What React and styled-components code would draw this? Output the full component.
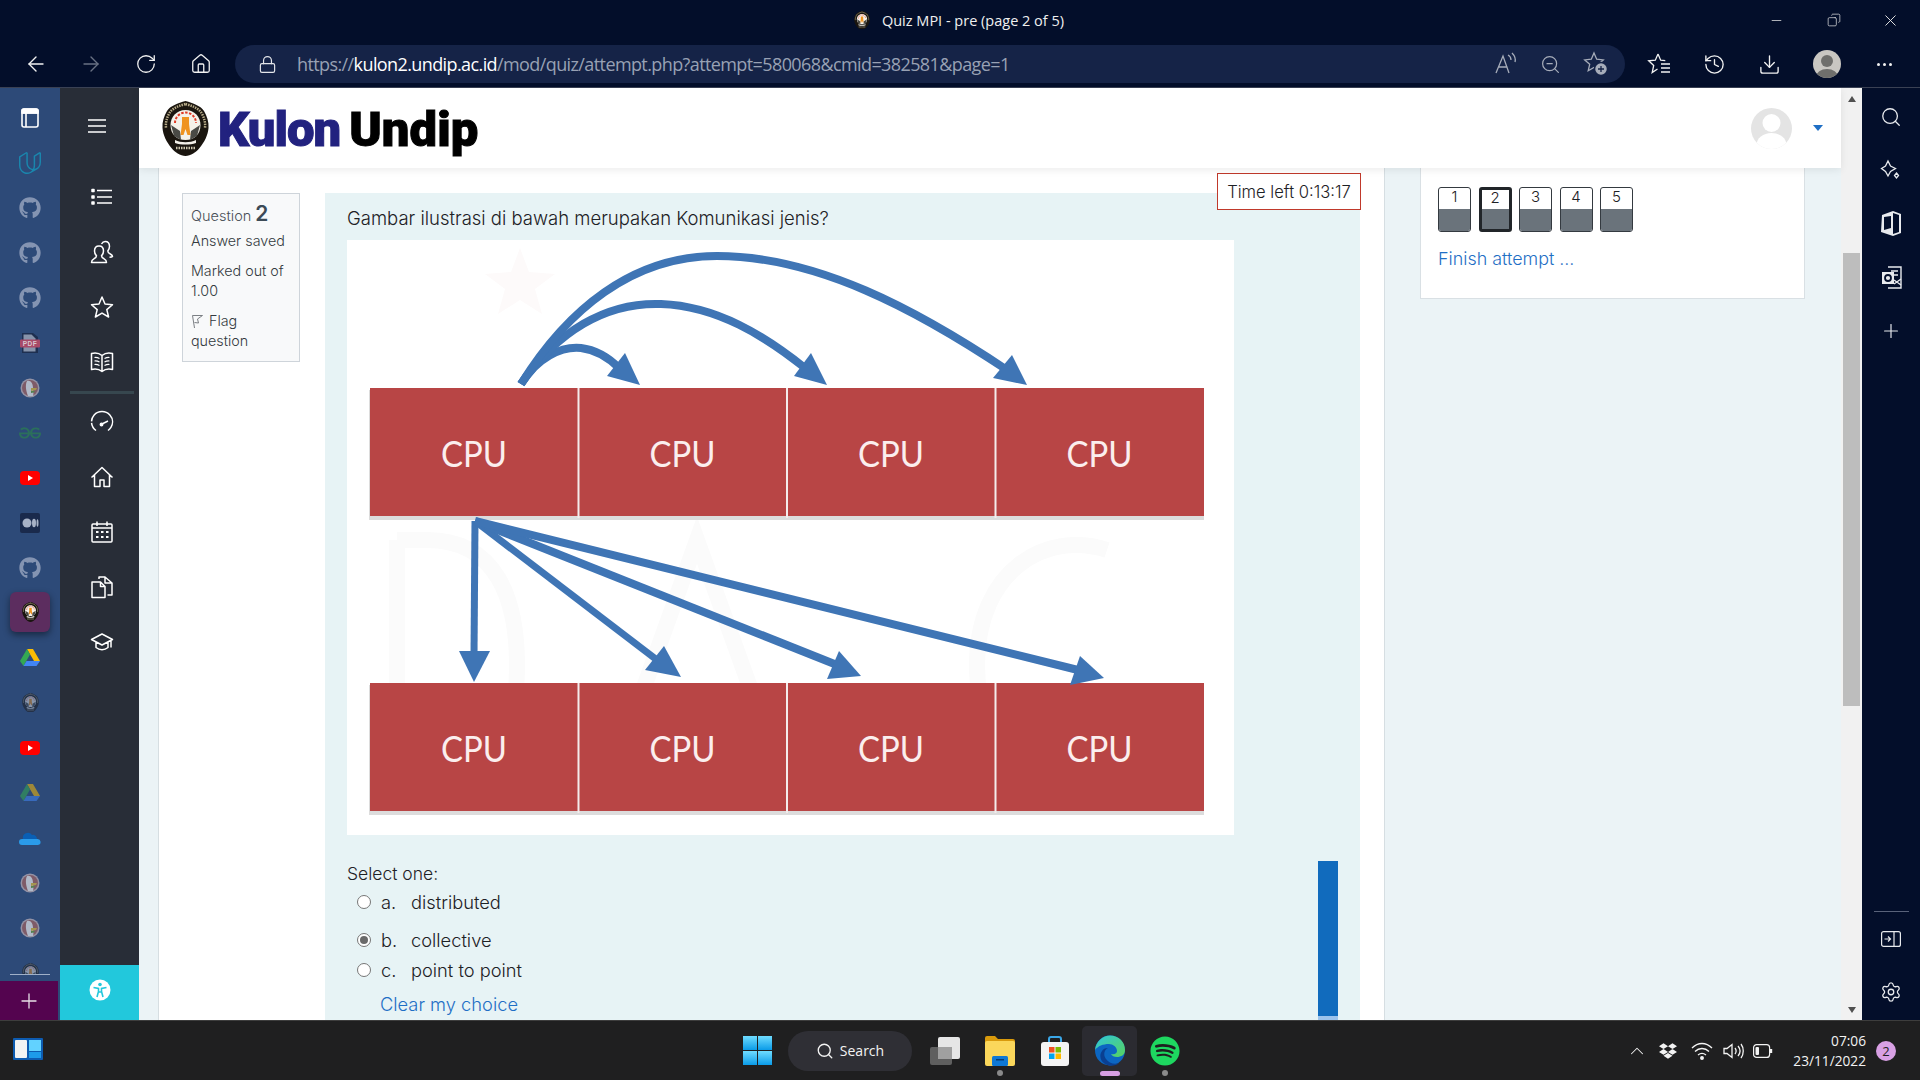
import React from "react"
import styled, { createGlobalStyle } from "styled-components"
import {
  ArrowLeft, ArrowRight, RotateCw, Home, Lock, ZoomOut, Download, History, Search, Plus, Settings, Minus, X, Copy, ChevronUp,
} from "lucide-react"
import { FaGithub, FaSpotify, FaDropbox } from "react-icons/fa"
import { SiUdacity, SiGeeksforgeeks } from "react-icons/si"

const GlobalStyle = createGlobalStyle`
  html, body { margin: 0; padding: 0; overflow: hidden; }
  body { font-family: Inter, "Open Sans", sans-serif; }
  * { box-sizing: border-box; }
`

const Screen = styled.div`
  width: 1920px;
  height: 1080px;
  display: flex;
  flex-direction: column;
  overflow: hidden;
  background: #030e2a;
`

/* browser chrome */
const TitleBar = styled.div`
  height: 44px;
  position: relative;
  display: flex;
  align-items: center;
  justify-content: center;
  gap: 12px;
  padding: 0 2px 4px 0;
  color: #f0f0f0;
  font: 14.5px "Open Sans", sans-serif;
`

const WindowButtons = styled.div`
  position: absolute;
  right: 0;
  top: 0;
  height: 40px;
  display: flex;
  align-items: center;
  color: #e8e8e8;
`

const WindowButton = styled.span`
  width: 57px;
  display: flex;
  justify-content: center;
  margin-right: ${p => p.$mr || 0}px;
`

const Toolbar = styled.div`
  height: 44px;
  display: flex;
  align-items: flex-start;
  padding-left: 8px;
  border-bottom: 1px solid #3a4154;
`

const ToolButton = styled.span`
  width: ${p => p.$w || 55}px;
  height: 38px;
  margin-top: 1px;
  display: flex;
  align-items: center;
  justify-content: center;
  color: ${p => p.$dim ? "#6a7284" : "#f2f2f2"};
`

const AddressBar = styled.div`
  width: 1390px;
  height: 38px;
  margin: 1px 7px 0 7px;
  padding: 0 7px 0 23px;
  background: #152347;
  border-radius: 19px;
  display: flex;
  align-items: center;
  color: #e4e6ea;
`

const Url = styled.span`
  margin-left: 20px;
  font: 18px "Open Sans", sans-serif;
  letter-spacing: -0.6px;
  color: #98a1b4;
  flex: 1;
  white-space: nowrap;
  b { font-weight: 400; color: #fff; }
`

const AddressIcon = styled.span`
  width: 45px;
  display: flex;
  justify-content: center;
  color: #a7adba;
`

const Avatar = styled.span`
  width: 28px;
  height: 28px;
  border-radius: 50%;
  background: #c9c7c2;
  position: relative;
  overflow: hidden;
  &::before { content: ""; position: absolute; left: 8px; top: 5px; width: 12px; height: 12px; border-radius: 50%; background: #6f6f6c; }
  &::after { content: ""; position: absolute; left: 3px; top: 19px; width: 22px; height: 16px; border-radius: 50%; background: #6f6f6c; }
`

const Dots = styled.span`
  display: flex;
  gap: 3px;
  i { width: 3px; height: 3px; border-radius: 50%; background: #f2f2f2; }
`

const Body = styled.div`
  flex: 1;
  min-height: 0;
  display: flex;
`

/* collection rail on the far left */
const Rail = styled.div`
  width: 60px;
  background: #2d4a78;
  display: flex;
  flex-direction: column;
`

const RailList = styled.div`
  height: 886px;
  padding-top: 7px;
  overflow: hidden;
`

const RailItem = styled.div`
  height: 45px;
  display: flex;
  align-items: center;
  justify-content: center;
  opacity: ${p => p.$fade || 1};
  color: ${p => p.$color || "#8494b2"};
  ${p => p.$active && `
    margin: 2px 10px 3px;
    height: 40px;
    border-radius: 6px;
    background: #5c2d5f;
    box-shadow: 0 3px 7px rgba(0,0,0,.45);
  `}
`

const RailRule = styled.div`
  height: 1px;
  margin: 0 10px;
  background: #9fb0c8;
`

const RailAdd = styled.div`
  margin-top: 6px;
  width: 58px;
  height: 39px;
  background: #54044f;
  color: #e8e0e8;
  display: flex;
  align-items: center;
  justify-content: center;
`

/* moodle dark nav drawer */
const Drawer = styled.div`
  width: 79px;
  background: #282d37;
  color: #fff;
  display: flex;
  flex-direction: column;
  position: relative;
`

const Burger = styled.div`
  height: 81px;
  padding: 31px 5px 0 0;
  display: flex;
  justify-content: center;
  align-items: flex-start;
`

const DrawerGroup = styled.div`
  display: flex;
  flex-direction: column;
  align-items: center;
  padding: 0 6px 0 0;
  margin-left: 10px;
`

const DrawerIcon = styled.div`
  height: 55px;
  display: flex;
  align-items: center;
  justify-content: center;
`

const DrawerRule = styled.div`
  width: 64px;
  height: 3px;
  margin: 2px 0 0;
  background: #37474f;
`

const A11yTab = styled.div`
  margin-top: auto;
  height: 55px;
  background: #22c8dc;
  display: flex;
  align-items: center;
  justify-content: center;
  padding-bottom: 6px;
`

/* page */
const Page = styled.div`
  flex: 1;
  min-width: 0;
  display: flex;
  flex-direction: column;
  background: #ebf3f6;
`

const Header = styled.header`
  height: 80px;
  flex: none;
  background: #fff;
  display: flex;
  align-items: center;
  padding: 0 18px 0 23px;
  position: relative;
  z-index: 3;
  box-shadow: 0 2px 8px rgba(0,0,0,.08);
`

const LogoWord = styled.span`
  margin: 2px 0 0 ${p => p.$ml}px;
  font: 900 ${p => p.$size}px Roboto, sans-serif;
  letter-spacing: ${p => p.$ls}px;
  color: ${p => p.$color};
  -webkit-text-stroke: 1px ${p => p.$color};
`

const UserPic = styled.span`
  margin-left: auto;
  width: 41px;
  height: 41px;
  border-radius: 50%;
  overflow: hidden;
  background: #e4e4e4;
`

const Caret = styled.span`
  margin-left: 21px;
  width: 0;
  height: 0;
  border: 5px solid transparent;
  border-top: 6px solid #1f6fc5;
  border-bottom: 0;
`

const Content = styled.div`
  flex: 1;
  min-height: 0;
  display: flex;
  overflow: hidden;
`

const Main = styled.main`
  margin-left: 19px;
  width: 1227px;
  border-left: 1px solid #d6dee2;
  border-right: 1px solid #d6dee2;
  background: #fff;
  padding: 25px 0 0 23px;
  display: flex;
  align-items: flex-start;
  gap: 25px;
  position: relative;
  overflow: hidden;
`

const TimeLeft = styled.div`
  position: absolute;
  top: 5px;
  right: 23px;
  width: 144px;
  height: 37px;
  border: 1px solid #c0392b;
  background: #fff;
  display: flex;
  align-items: center;
  justify-content: center;
  font-size: 16.6px;
  font-weight: 300;
  color: #1d2125;
  z-index: 2;
`

const InfoCard = styled.div`
  width: 118px;
  flex: none;
  height: 169px;
  padding: 7px 0 0 8px;
  border: 1px solid #ced4da;
  background: #f8f9fa;
  font-size: 14.3px;
  font-weight: 300;
  line-height: 20px;
  color: #343a40;
`

const InfoTitle = styled.div`
  color: #495057;
  line-height: 25px;
  font-size: 14.5px;
  b { font-size: 21px; font-weight: 600; margin-left: 4px; color: #3c4a56; }
`

const InfoLine = styled.div`
  margin-top: ${p => p.$mt || 0}px;
`

const QuestionBox = styled.section`
  width: 1035px;
  flex: none;
  background: #e7f3f5;
  padding: 13px 22px 0;
  color: #1d2125;
  font-weight: 300;
  height: 900px;
`

const Prompt = styled.p`
  margin: 0 0 10px;
  font-size: 18.5px;
  line-height: 24px;
`

const Diagram = styled.svg`
  display: block;
  width: 887px;
  height: 595px;
  background: #fff;
`

const AnswerArea = styled.div`
  margin-top: 26px;
  display: flex;
  justify-content: space-between;
`

const SelectLabel = styled.div`
  margin-top: 1px;
  font-size: 17.5px;
  line-height: 24px;
`

const AnswerRow = styled.div`
  margin-top: ${p => p.$mt}px;
  height: 24px;
  padding-left: 10px;
  display: flex;
  align-items: center;
  font-size: 18.3px;
`

const Radio = styled.span`
  width: 14px;
  height: 14px;
  border-radius: 50%;
  border: 1px solid #767676;
  background: #fff;
  margin-right: 10px;
  display: flex;
  align-items: center;
  justify-content: center;
  &::after {
    content: "";
    width: 8px;
    height: 8px;
    border-radius: 50%;
    background: ${p => p.$on ? "#6a6a6a" : "transparent"};
  }
`

const Letter = styled.span`
  width: 30px;
`

const ClearLink = styled.a`
  display: block;
  margin: 10px 0 0 33px;
  font-size: 18.3px;
  line-height: 24px;
  color: #1f6fc5;
`

const ProgressBar = styled.div`
  width: 20px;
  height: 170px;
  background: linear-gradient(#116bbd 0 155px, #9cc3ec 155px);
`

const Side = styled.aside`
  margin-left: 35px;
  width: 385px;
  height: 131px;
  padding: 19px 0 0 17px;
  background: #fff;
  border: 1px solid #d9e0e4;
  border-top: 0;
`

const NavButtons = styled.div`
  display: flex;
  gap: 7.5px;
`

const NavButton = styled.span`
  width: 33px;
  height: 45px;
  border: ${p => p.$current ? "3px solid #212529" : "1px solid #343a40"};
  border-radius: 3px;
  overflow: hidden;
  display: flex;
  flex-direction: column;
  font-size: 15px;
  font-weight: 300;
  line-height: ${p => p.$current ? 15 : 17}px;
  text-align: center;
  color: #1d2125;
  background: #fff;
  span { height: ${p => p.$current ? 19 : 21}px; }
  &::after {
    content: "";
    flex: 1;
    background: #6a737b;
  }
`

const FinishLink = styled.a`
  display: block;
  margin-top: 15px;
  font-size: 17.9px;
  font-weight: 300;
  line-height: 24px;
  color: #1f6fc5;
`

const ScrollTrack = styled.div`
  width: 21px;
  background: #f1f1f1;
  display: flex;
  flex-direction: column;
  align-items: center;
  padding: 8px 0 7px;
`

const ScrollThumb = styled.div`
  width: 17px;
  height: 453px;
  margin-top: 151px;
  margin-bottom: auto;
  background: #bdbdbd;
`

const ScrollArrow = styled.span`
  width: 0;
  height: 0;
  border-left: 4.5px solid transparent;
  border-right: 4.5px solid transparent;
  ${p => p.$up ? "border-bottom: 6px solid #505050;" : "border-top: 6px solid #505050;"}
`

/* edge sidebar on the right */
const EdgeBar = styled.div`
  width: 58px;
  color: #e8eaee;
  display: flex;
  flex-direction: column;
  align-items: center;
  padding: 2px 0 1px;
`

const EdgeIcon = styled.div`
  height: 53.5px;
  width: 100%;
  display: flex;
  align-items: center;
  justify-content: center;
`

const EdgeRule = styled.div`
  margin-top: auto;
  width: 35px;
  height: 1px;
  background: #59627a;
`

/* windows taskbar */
const Taskbar = styled.footer`
  height: 60px;
  flex: none;
  background: #1f1f20;
  border-top: 1px solid #3d3d3d;
  display: grid;
  grid-template-columns: 1fr auto 1fr;
  align-items: center;
  color: #f3f3f3;
`

const TaskStart = styled.div`
  padding-left: 13px;
`

const TaskCenter = styled.div`
  display: flex;
  align-items: center;
  padding-left: 4px;
`

const TaskSlot = styled.div`
  width: ${p => p.$w || 55}px;
  height: 50px;
  display: flex;
  align-items: center;
  justify-content: center;
  position: relative;
  ${p => p.$active && "background: #2b2b31; border-radius: 5px;"}
  ${p => p.$dot && `&::after {
    content: "";
    position: absolute;
    bottom: 0;
    left: 50%;
    margin-left: ${p.$active ? -10 : -3}px;
    width: ${p.$active ? 20 : 6}px;
    height: ${p.$active ? 5 : 6}px;
    border-radius: 3px;
    background: ${p.$active ? "#d8a0e4" : "#8a8a8a"};
  }`}
`

const SearchPill = styled.div`
  width: 124px;
  height: 40px;
  margin: 0 5px 0 6px;
  border-radius: 20px;
  background: #2f2f35;
  display: flex;
  align-items: center;
  justify-content: center;
  gap: 6px;
  font: 14px "Open Sans", sans-serif;
`

const Tray = styled.div`
  display: flex;
  align-items: center;
  justify-content: flex-end;
  padding-right: 24px;
  height: 100%;
`

const TrayIcon = styled.span`
  width: ${p => p.$w || 30}px;
  display: flex;
  justify-content: center;
`

const Clock = styled.div`
  margin-left: 14px;
  text-align: right;
  font: 13.7px/20px "Open Sans", sans-serif;
`

const Badge = styled.span`
  width: 20px;
  height: 20px;
  margin-left: 10px;
  border-radius: 50%;
  background: #d8a0e4;
  color: #1f1f20;
  font: 13px/20px "Open Sans", sans-serif;
  text-align: center;
`

const Emblem = ({ size = 47 }) => (
  <svg width={size} height={size * 55 / 47} viewBox="0 0 47 55">
    <path d="M23.500 0C31 2 39 5 42 10c3 5 5 11 4.500 17-.5 7-4 14-9 20-3 4-9 8-14 8s-11-4-14-8C4.500 41 1 34 .5 27 0 21 2 15 5 10 8 5 16 2 23.500 0z" fill="#1a150f" />
    <path d="M23.500 3c7 2 13 4 16 9 3 5 4 10 3.500 15" fill="none" stroke="#b9ad8a" strokeWidth="2.500" strokeDasharray="1.500 1" />
    <path d="M23.500 3c-7 2-13 4-16 9-3 5-4 10-3.500 15" fill="none" stroke="#b9ad8a" strokeWidth="2.500" strokeDasharray="1.500 1" />
    <path d="M23.500 9c9 0 15 7 15 15 0 9-6 15-15 15s-15-6-15-15c0-8 6-15 15-15z" fill="#f4f1ea" />
    <path d="M13 22a10.500 10.500 0 0 1 21 0" fill="none" stroke="#e03a25" strokeWidth="2" strokeDasharray="2.500 1.500" />
    <path d="M20 16h7v7l1.500 11h-3l-2-6-2 6h-3L20 23z" fill="#ef9320" />
    <path d="M9 24l9 6 1 9-7-4zM38 24l-9 6-1 9 7-4zM12 28l6 5M35 28l-6 5" fill="#4a4a46" />
    <path d="M13 39c6 3 15 3 21 0v3c-6 2-15 2-21 0z" fill="#f4f1ea" />
    <path d="M14 47h19" stroke="#cfc8b0" strokeWidth="2.500" strokeDasharray="1.500 1" />
  </svg>
)

const Duck = () => (
  <svg width="20" height="20" viewBox="0 0 20 20" opacity="0.85">
    <circle cx="10" cy="10" r="9.500" fill="#a7a0ae" />
    <circle cx="10" cy="10" r="8" fill="#8d5f66" />
    <path d="M7 3c4-1 6 3 6 7s1 5 0 8H8C6 13 5 7 7 3z" fill="#c9ced8" />
    <path d="M11 10h6l-1 2-5 1z" fill="#b9a34a" />
    <path d="M11 13h4l-1 1.500-3 .5z" fill="#5d8a4b" />
  </svg>
)

const Drive = ({ fade }) => (
  <svg width="20" height="18" viewBox="0 0 20 18" opacity={fade || 1}>
    <path d="M7 0h6l7 12h-6z" fill="#fbbc04" />
    <path d="M7 0l3 5.500L3.500 17 0 12z" fill="#34a853" />
    <path d="M6.500 12H20l-3.500 5H3.500z" fill="#4285f4" />
  </svg>
)

const Cloud = () => (
  <svg width="22" height="14" viewBox="0 0 22 14">
    <path d="M4 8a5 5 0 0 1 9-4 4 4 0 0 1 5 4z" fill="#0a5fb4" />
    <path d="M3 14a3 3 0 0 1 0-6h15a3 3 0 0 1 1 6z" fill="#2a9bea" />
  </svg>
)

const PdfIcon = () => (
  <svg width="20" height="20" viewBox="0 0 20 20">
    <path d="M2 0h11l5 4v16H2z" fill="#1e2f50" />
    <path d="M3.500 1.500h8l4 4v13h-12z" fill="#8793aa" />
    <rect x="0" y="6.500" width="20" height="8" rx="1" fill="#a84a68" />
    <text x="10" y="13" textAnchor="middle" fontFamily="'Liberation Sans', sans-serif" fontWeight="700" fontSize="6.500" letterSpacing=".5" fill="#d8c8d0">PDF</text>
  </svg>
)

const MediumIcon = () => (
  <svg width="20" height="20" viewBox="0 0 20 20">
    <rect width="20" height="20" rx="2" fill="#1a2a4c" />
    <ellipse cx="7" cy="10" rx="4.500" ry="4.500" fill="#a8b2c6" />
    <ellipse cx="14" cy="10" rx="2" ry="4.200" fill="#a8b2c6" />
    <ellipse cx="17.500" cy="10" rx="1" ry="3.800" fill="#a8b2c6" />
  </svg>
)

const YoutubeIcon = () => (
  <svg width="20" height="14" viewBox="0 0 20 14">
    <rect width="20" height="14" rx="4" fill="#f00" />
    <path d="M8 4l5 3-5 3z" fill="#fff" />
  </svg>
)

const CollectionsIcon = () => (
  <svg width="18" height="20" viewBox="0 0 18 20" fill="none" stroke="#fff" strokeWidth="1.600">
    <rect x="1" y="1" width="16" height="18" rx="2" />
    <path d="M1 5h16M5 5v14" />
    <path d="M1 3a2 2 0 0 1 2-2h12a2 2 0 0 1 2 2v2H1z" fill="#fff" />
  </svg>
)

const DrawerSvg = ({ children }) => (
  <svg width="24" height="24" viewBox="0 0 24 24" fill="none" stroke="#fff" strokeWidth="1.500" strokeLinejoin="round">{children}</svg>
)

const drawerTop = [
  <DrawerSvg><path d="M7 5.500h15M7 12h15M7 18h15" /><path d="M2 4.500h2v2H2zM2 11h2v2H2zM2 17h2v2H2z" fill="#fff" /></DrawerSvg>,
  <DrawerSvg><path d="M9 6c-3 0-4.500 2-4.500 5 0 2 1 3.800 2 4.800 0 1.700-.9 2.200-2.600 3C2.100 19.700 1.500 20.600 1.500 22.500h15c0-1.900-.6-2.800-2.400-3.700-1.700-.8-2.600-1.300-2.600-3 1-1 2-2.800 2-4.800 0-3-1.500-5-4.500-5z" /><path d="M11.500 4c.8-1.500 2-2.500 3.700-2.500 3 0 4.300 2.200 4.300 5 0 2-1 3.500-1.700 4.500 0 1.700.8 2.200 2.500 3 1.500.8 2.200 1.500 2.200 2.500-.5.5-1.500.7-3 .7" /></DrawerSvg>,
  <DrawerSvg><path d="M12 2l3 7 7.500.7-5.700 4.900 1.800 7.400L12 18.100 5.400 22l1.800-7.400L1.500 9.700 9 9z" /></DrawerSvg>,
  <DrawerSvg><path d="M1.500 3.500c4-1 7.500-.5 10.500 2 3-2.500 6.500-3 10.500-2v16c-4-1-7.500-.5-10.500 2-3-2.500-6.500-3-10.500-2zM12 5.500v16" /><path d="M4.500 7.500c2-.2 3.500.2 5 1M4.500 11c2-.2 3.500.2 5 1M4.500 14.500c2-.2 3.500.2 5 1M19.500 7.500c-2-.2-3.500.2-5 1M19.500 11c-2-.2-3.500.2-5 1M19.500 14.500c-2-.2-3.500.2-5 1" strokeWidth="1.200" /></DrawerSvg>,
]

const drawerBottom = [
  <DrawerSvg><path d="M6 20.500A10.500 10.500 0 1 1 18 20.500M12 14l6-3" strokeDasharray="9 1.500 38 0" /><circle cx="11.500" cy="14.500" r="1.200" fill="#fff" /></DrawerSvg>,
  <DrawerSvg><path d="M1.500 12.500L12 2.500l10.500 10M4.500 10v11.500h5.500V15h4v6.500h5.500V10" /></DrawerSvg>,
  <DrawerSvg><rect x="2" y="4" width="20" height="18" rx="1" /><path d="M7 1.500V6M17 1.500V6M2 8h20" /><path d="M6 11h2.500v2H6zM11 11h2.500v2H11zM16 11h2.500v2H16zM6 16h2.500v2H6zM11 16h2.500v2H11zM16 16h2.500v2H16z" fill="#fff" stroke="none" /></DrawerSvg>,
  <DrawerSvg><path d="M2 7h8.500L15 11.500V22.500H2zM10.500 7v4.500H15" /><path d="M9 4V2h6l7 6v12h-4.500M15 2v6h7" /></DrawerSvg>,
  <DrawerSvg><path d="M12 4L1.500 9.500 12 15l10.500-5.500zM6 12.500v5c3.500 3 8.500 3 12 0v-5M21 10.500v7" /></DrawerSvg>,
]

const railItems = [
  { el: <CollectionsIcon /> },
  { el: <SiUdacity size={22} />, color: "#1a86ad" },
  { el: <FaGithub size={22} /> },
  { el: <FaGithub size={22} /> },
  { el: <FaGithub size={22} /> },
  { el: <PdfIcon /> },
  { el: <Duck /> },
  { el: <SiGeeksforgeeks size={22} />, color: "#2b6f5c" },
  { el: <YoutubeIcon /> },
  { el: <MediumIcon /> },
  { el: <FaGithub size={22} /> },
  { el: <Emblem size={17} />, active: true },
  { el: <Drive /> },
  { el: <Emblem size={17} />, fade: 0.45 },
  { el: <YoutubeIcon /> },
  { el: <Drive fade={0.55} /> },
  { el: <Cloud /> },
  { el: <Duck /> },
  { el: <Duck /> },
  { el: <Emblem size={17} />, fade: 0.45 },
]

const cells = [24, 232.500, 441, 649.500]

const arrows = [
  { d: "M174 144 C190 118 214 106 234 108 C250 110 262 118 272 128", head: "293,145 260,136 278,113", w: 8 },
  { d: "M174 144 C210 92 258 62 314 64 C370 66 418 96 458 128", head: "480,145 447,136 464,113", w: 8 },
  { d: "M174 144 C220 70 285 16 370 16 C470 16 570 70 660 130", head: "680,145 646,138 665,115", w: 8 },
  { d: "M128 281 L127 415", head: "127,442 112,411 143,411", w: 7 },
  { d: "M128 281 L310 420", head: "334,437 298,430 317,406", w: 7 },
  { d: "M128 281 L490 425", head: "514,436 480,439 492,411", w: 8 },
  { d: "M128 281 L735 431", head: "757,438 723,445 733,416", w: 8 },
]

const CpuRow = ({ y }) => (
  <g>
    <rect x="22" y={y + 2} width="835" height="130" fill="#dcdcdc" />
    {cells.map(x => (
      <g key={x}>
        <rect x={x - 1} y={y} width="208.500" height="128" fill="#b84545" />
        <text x={x + 103} y={y + 79} textAnchor="middle" fontFamily="Lato, sans-serif" fontWeight="400" fontSize="37" textLength="66" lengthAdjust="spacingAndGlyphs" fill="#fbeeee">CPU</text>
      </g>
    ))}
    {cells.slice(1).map(x => <rect key={x} x={x - 2} y={y} width="2" height="130" fill="#f4ecec" />)}
  </g>
)

const FlagIcon = () => (
  <svg width="13" height="15" viewBox="0 0 13 15" fill="none" stroke="#7b7f84" strokeWidth="1" style={{ marginRight: 5, verticalAlign: -3 }}>
    <path d="M1.500 1.500h10l-5 3.500 1 4-4-.5M1.500 1.500l2 12.500" />
  </svg>
)

const StartLogo = () => (
  <svg width="29" height="29" viewBox="0 0 29 29">
    <defs>
      <linearGradient id="win" x1="0" y1="0" x2="0" y2="1">
        <stop offset="0" stopColor="#6fdcff" />
        <stop offset="1" stopColor="#0a9be8" />
      </linearGradient>
    </defs>
    <rect x="0" y="0" width="14" height="14" fill="url(#win)" />
    <rect x="15" y="0" width="14" height="14" fill="url(#win)" />
    <rect x="0" y="15" width="14" height="14" fill="url(#win)" />
    <rect x="15" y="15" width="14" height="14" fill="url(#win)" />
  </svg>
)

const TaskView = () => (
  <svg width="30" height="28" viewBox="0 0 30 28">
    <rect x="0" y="10" width="22" height="18" rx="2" fill="#5f5f5f" />
    <rect x="8" y="0" width="22" height="22" rx="2" fill="#e6e6e6" />
    <rect x="8" y="10" width="14" height="12" fill="#a0a0a0" />
  </svg>
)

const Explorer = () => (
  <svg width="30" height="30" viewBox="0 0 30 30">
    <path d="M0 2a2 2 0 0 1 2-2h8l3 3h15a2 2 0 0 1 2 2v4H0z" fill="#d99a0c" />
    <rect x="0" y="5" width="30" height="25" rx="2" fill="#fbd75b" />
    <rect x="7" y="20" width="16" height="10" rx="1.500" fill="#0f78d4" />
    <rect x="11" y="23" width="8" height="1.500" fill="#063b74" />
  </svg>
)

const Store = () => (
  <svg width="30" height="30" viewBox="0 0 30 30">
    <path d="M9 8V3a2 2 0 0 1 2-2h8a2 2 0 0 1 2 2v5" fill="none" stroke="#3aa7e8" strokeWidth="2" />
    <rect x="1" y="6" width="28" height="24" rx="3" fill="#f4f4f4" />
    <rect x="9" y="11" width="5.500" height="5.500" fill="#f25022" />
    <rect x="15.500" y="11" width="5.500" height="5.500" fill="#7fba00" />
    <rect x="9" y="17.500" width="5.500" height="5.500" fill="#00a4ef" />
    <rect x="15.500" y="17.500" width="5.500" height="5.500" fill="#ffb900" />
  </svg>
)

const Edge = () => (
  <svg width="32" height="31" viewBox="0 0 32 31">
    <defs>
      <linearGradient id="edgeA" x1="0" y1="0" x2="1" y2="1">
        <stop offset="0" stopColor="#2fc6d8" />
        <stop offset="1" stopColor="#58d25e" />
      </linearGradient>
    </defs>
    <circle cx="16" cy="15.500" r="15" fill="#0c66c2" />
    <path d="M1 15C2 6 9 .5 16 .5 25 .5 31 7 31 15c0 5-4 7-8 7-3 0-5-1-6-3 4 1 6-1 6-3 0-4-4-7-8-7-6 0-11 2-14 6z" fill="url(#edgeA)" />
    <path d="M14 13c-4 2-5 7-2 11 3 4 8 6 13 4-3 3-9 4-14 1C6 26 5 20 8 16c1-2 3-3 6-3z" fill="#0a3f91" />
  </svg>
)

const Wifi = () => (
  <svg width="22" height="18" viewBox="0 0 22 18" fill="none" stroke="#f3f3f3" strokeWidth="1.300">
    <path d="M1 6c6-6 14-6 20 0M4 9.500c4-4 10-4 14 0M7 13c2.500-2 5.500-2 8 0" />
    <circle cx="11" cy="16" r="1.300" fill="#f3f3f3" />
  </svg>
)

const Volume = () => (
  <svg width="21" height="18" viewBox="0 0 21 18" fill="none" stroke="#f3f3f3" strokeWidth="1.300">
    <path d="M1 6.500h3L9 2.500v13L4 11.500H1zM12 6c1.500 2 1.500 4 0 6M15 4c2.500 3 2.500 7 0 10M18 2c3 4 3 10 0 14" />
  </svg>
)

const Battery = () => (
  <svg width="20" height="14" viewBox="0 0 20 14" fill="none" stroke="#f3f3f3" strokeWidth="1.200">
    <rect x=".6" y=".6" width="16" height="12.800" rx="3" />
    <rect x="2.500" y="3" width="3.500" height="8" rx="1" fill="#f3f3f3" stroke="none" />
    <path d="M18 5v4" strokeWidth="2.400" />
  </svg>
)

const Widgets = () => (
  <svg width="30" height="22" viewBox="0 0 30 22">
    <rect width="30" height="22" rx="1" fill="#0d5bb0" />
    <rect x="2" y="2" width="12" height="18" rx="1" fill="#f3f3f3" />
    <rect x="16" y="2" width="12" height="11" fill="#62d2ff" />
    <rect x="16" y="14" width="12" height="6" fill="#1d9bea" />
  </svg>
)

const starPath = "M11 2l2.700 6.200 6.600.7-5 4.400 1.500 6.500-5.800-3.400-5.800 3.400 1.500-6.500-5-4.400 6.600-.7z"

const FavAdd = () => (
  <svg width="26" height="26" viewBox="0 0 26 26" fill="none" stroke="#a7adba" strokeWidth="1.300">
    <path d={starPath} />
    <circle cx="18" cy="18" r="6.500" fill="#a7adba" stroke="#152347" strokeWidth="1.500" />
    <path d="M18 15v6M15 18h6" stroke="#152347" />
  </svg>
)

const ReadAloud = () => (
  <svg width="24" height="24" viewBox="0 0 24 24" fill="none" stroke="#a7adba" strokeWidth="1.300">
    <path d="M2 21L9 4l6 17M4.500 15h9" />
    <path d="M14 3c2 1 3 3 3 5M18 1c2 2 4 5 3 9" />
  </svg>
)

const FavList = () => (
  <svg width="26" height="26" viewBox="0 0 26 26" fill="none" stroke="#f2f2f2" strokeWidth="1.300">
    <path d="M11 3l2.700 6.200 4.600.5M10.500 18l-5.300 3.500 1.500-7-5-4.700 6.600-.6L11 3" />
    <path d="M14 13h9M14 17h9M14 21h9" />
  </svg>
)

const SparkIcon = () => (
  <svg width="22" height="24" viewBox="0 0 22 24" fill="none" stroke="#e8eaee" strokeWidth="1.300">
    <path d="M8 3l2.500 5 5 2.500-5 3L8 18l-2.500-4.500-4-3 4-2.500zM16.500 15l2 2.500-2 2.500-2-2.500z" />
  </svg>
)

const OfficeIcon = () => (
  <svg width="20" height="25" viewBox="0 0 20 25" fill="#e8eaee">
    <path d="M12 0l8 3v19l-8 3-12-4 1-17zM12 2v21l6-2V4zM3 6v13l7-2V5z" fillRule="evenodd" />
  </svg>
)

const OutlookIcon = () => (
  <svg width="21" height="23" viewBox="0 0 21 23" fill="none" stroke="#e8eaee" strokeWidth="1.400">
    <path d="M7 1h13v21H7M10 5h7M10 9h7" />
    <rect x="1" y="6" width="12" height="12" fill="#e8eaee" stroke="none" />
    <circle cx="7" cy="12" r="3" stroke="#030e2a" strokeWidth="1.800" />
    <path d="M13 14l7 5M20 13l-7 5" />
  </svg>
)

const SplitIcon = () => (
  <svg width="20" height="16" viewBox="0 0 20 16" fill="none" stroke="#e8eaee" strokeWidth="1.200">
    <rect x=".6" y=".6" width="18.800" height="14.800" rx="2" />
    <path d="M13 1v14M3.500 8h6M7 5.500L9.500 8 7 10.500" />
  </svg>
)

const UserShape = () => (
  <svg width="41" height="41" viewBox="0 0 41 41">
    <circle cx="20.500" cy="15" r="9" fill="#fff" />
    <ellipse cx="20.500" cy="37" rx="15" ry="12" fill="#fff" />
  </svg>
)

const A11y = () => (
  <svg width="22" height="22" viewBox="0 0 22 22">
    <circle cx="11" cy="11" r="10.500" fill="#fff" />
    <circle cx="11" cy="5.500" r="1.800" fill="#22c8dc" />
    <path d="M4.500 8.500l5 1v3l-1.500 5.500M17.500 8.500l-5 1v3l1.500 5.500M9.500 13h3" fill="none" stroke="#22c8dc" strokeWidth="1.600" />
  </svg>
)

export default function App() {
  return (
    <Screen>
      <GlobalStyle />
      <TitleBar>
        <Emblem size={16} />
        <span>Quiz MPI - pre (page 2 of 5)</span>
        <WindowButtons>
          <WindowButton><Minus size={15} strokeWidth={1.2} /></WindowButton>
          <WindowButton><Copy size={14} strokeWidth={1.2} style={{ transform: "scaleX(-1)" }} /></WindowButton>
          <WindowButton $mr={1}><X size={19} strokeWidth={1.2} /></WindowButton>
        </WindowButtons>
      </TitleBar>

      <Toolbar>
        <ToolButton><ArrowLeft size={24} strokeWidth={1.4} /></ToolButton>
        <ToolButton $dim><ArrowRight size={24} strokeWidth={1.4} /></ToolButton>
        <ToolButton><RotateCw size={22} strokeWidth={1.4} /></ToolButton>
        <ToolButton><Home size={22} strokeWidth={1.4} /></ToolButton>
        <AddressBar>
          <Lock size={19} strokeWidth={1.5} />
          <Url>https://<b>kulon2.undip.ac.id</b>/mod/quiz/attempt.php?attempt=580068&amp;cmid=382581&amp;page=1</Url>
          <AddressIcon><ReadAloud /></AddressIcon>
          <AddressIcon><ZoomOut size={21} strokeWidth={1.4} /></AddressIcon>
          <AddressIcon><FavAdd /></AddressIcon>
        </AddressBar>
        <ToolButton><FavList /></ToolButton>
        <ToolButton><History size={23} strokeWidth={1.4} /></ToolButton>
        <ToolButton><Download size={23} strokeWidth={1.4} /></ToolButton>
        <ToolButton $w={60}><Avatar /></ToolButton>
        <ToolButton><Dots><i /><i /><i /></Dots></ToolButton>
      </Toolbar>

      <Body>
        <Rail>
          <RailList>
            {railItems.map((item, i) => (
              <RailItem key={i} $color={item.color} $fade={item.fade} $active={item.active}>{item.el}</RailItem>
            ))}
          </RailList>
          <RailRule />
          <RailAdd><Plus size={24} strokeWidth={1.3} /></RailAdd>
        </Rail>

        <Drawer>
          <Burger>
            <svg width="18" height="14" viewBox="0 0 18 14" stroke="#fff" strokeWidth="1.600"><path d="M0 1h18M0 7h18M0 13h18" /></svg>
          </Burger>
          <DrawerGroup>
            {drawerTop.map((icon, i) => <DrawerIcon key={i}>{icon}</DrawerIcon>)}
            <DrawerRule />
            {drawerBottom.map((icon, i) => <DrawerIcon key={i}>{icon}</DrawerIcon>)}
          </DrawerGroup>
          <A11yTab><A11y /></A11yTab>
        </Drawer>

        <Page>
          <Header>
            <Emblem />
            <LogoWord $ml={9} $size={49} $ls={-1} $color="#22227f">Kulon</LogoWord>
            <LogoWord $ml={9} $size={49} $ls={0.1} $color="#000">Undip</LogoWord>
            <UserPic><UserShape /></UserPic>
            <Caret />
          </Header>
          <Content>
            <Main>
              <TimeLeft>Time left 0:13:17</TimeLeft>
              <InfoCard>
                <InfoTitle>Question<b>2</b></InfoTitle>
                <InfoLine $mt={3}>Answer saved</InfoLine>
                <InfoLine $mt={10}>Marked out of<br />1.00</InfoLine>
                <InfoLine $mt={10}><FlagIcon />Flag<br />question</InfoLine>
              </InfoCard>
              <QuestionBox>
                <Prompt>Gambar ilustrasi di bawah merupakan Komunikasi jenis?</Prompt>
                <Diagram viewBox="0 0 887 595">
                  <path d="M173 8l9 24 26 2-20 15 7 25-22-14-22 14 7-25-20-15 26-2z" fill="#fdfafa" />
                  <path d="M50 300v250M50 300h30c70 0 90 60 90 125s-20 125-90 125h-30M260 550l90-250 90 250M760 310c-60-20-130 20-130 115s70 135 130 115" fill="none" stroke="#fbfbfb" strokeWidth="16" />
                  <CpuRow y={148} />
                  <CpuRow y={443} />
                  {arrows.map((a, i) => (
                    <g key={i}>
                      <path d={a.d} fill="none" stroke="#3f75b5" strokeWidth={a.w} />
                      <polygon points={a.head} fill="#3f75b5" />
                    </g>
                  ))}
                </Diagram>
                <AnswerArea>
                  <div>
                    <SelectLabel>Select one:</SelectLabel>
                    <AnswerRow $mt={4}><Radio /><Letter>a.</Letter>distributed</AnswerRow>
                    <AnswerRow $mt={14}><Radio $on /><Letter>b.</Letter>collective</AnswerRow>
                    <AnswerRow $mt={6}><Radio /><Letter>c.</Letter>point to point</AnswerRow>
                    <ClearLink>Clear my choice</ClearLink>
                  </div>
                  <ProgressBar />
                </AnswerArea>
              </QuestionBox>
            </Main>
            <Side>
              <NavButtons>
                {[1, 2, 3, 4, 5].map(n => <NavButton key={n} $current={n === 2}><span>{n}</span></NavButton>)}
              </NavButtons>
              <FinishLink>Finish attempt ...</FinishLink>
            </Side>
          </Content>
        </Page>

        <ScrollTrack>
          <ScrollArrow $up />
          <ScrollThumb />
          <ScrollArrow />
        </ScrollTrack>

        <EdgeBar>
          <EdgeIcon><Search size={22} strokeWidth={1.4} /></EdgeIcon>
          <EdgeIcon><SparkIcon /></EdgeIcon>
          <EdgeIcon><OfficeIcon /></EdgeIcon>
          <EdgeIcon><OutlookIcon /></EdgeIcon>
          <EdgeIcon><Plus size={22} strokeWidth={1.3} /></EdgeIcon>
          <EdgeRule />
          <EdgeIcon><SplitIcon /></EdgeIcon>
          <EdgeIcon><Settings size={22} strokeWidth={1.4} /></EdgeIcon>
        </EdgeBar>
      </Body>

      <Taskbar>
        <TaskStart><Widgets /></TaskStart>
        <TaskCenter>
          <TaskSlot $w={50}><StartLogo /></TaskSlot>
          <SearchPill><Search size={18} strokeWidth={1.8} />Search</SearchPill>
          <TaskSlot><TaskView /></TaskSlot>
          <TaskSlot $dot><Explorer /></TaskSlot>
          <TaskSlot><Store /></TaskSlot>
          <TaskSlot $dot $active><Edge /></TaskSlot>
          <TaskSlot $dot><FaSpotify size={30} color="#1ed760" /></TaskSlot>
        </TaskCenter>
        <Tray>
          <TrayIcon $w={28}><ChevronUp size={22} strokeWidth={1.1} /></TrayIcon>
          <TrayIcon $w={34}><FaDropbox size={18} /></TrayIcon>
          <TrayIcon $w={34}><Wifi /></TrayIcon>
          <TrayIcon $w={28}><Volume /></TrayIcon>
          <TrayIcon $w={32}><Battery /></TrayIcon>
          <Clock>07:06<br />23/11/2022</Clock>
          <Badge>2</Badge>
        </Tray>
      </Taskbar>
    </Screen>
  )
}
